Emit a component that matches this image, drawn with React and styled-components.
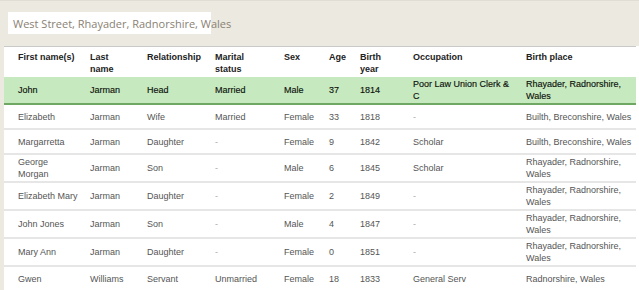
import React from 'react';
import styled, { createGlobalStyle } from 'styled-components';

const GlobalStyle = createGlobalStyle`
  html, body {
    margin: 0;
    padding: 0;
    background: #fff;
  }

  body {
    font-family: "Liberation Sans", Arial, sans-serif;
  }
`;

const Panel = styled.div`
  background: #ece9e1;
  border-top: 1px solid #e0ddd4;
  padding-left: 4px;
`;

const TopBar = styled.div`
  padding: 11px 0 12px 4px;
`;

const SearchBox = styled.div`
  width: 198px;
  height: 22px;
  padding-left: 5px;
  background: #fff;
  display: flex;
  align-items: center;
  font-family: "Open Sans", sans-serif;
  font-size: 11px;
  color: #8a8173;
  white-space: nowrap;
`;

const TableWrap = styled.div`
  background: #fff;
`;

const Table = styled.table`
  width: 632px;
  table-layout: fixed;
  border-collapse: collapse;
  border-top: 1px solid #c9c9c9;
  font-size: 9px;
  line-height: 12px;
`;

const Th = styled.th`
  text-align: left;
  vertical-align: top;
  font-weight: bold;
  color: #222;
  padding: 4px 8px 2px 0;

  &:first-child {
    padding-left: 14px;
  }
`;

const Row = styled.tr`
  background: ${(p) => (p.$current ? '#c7e9c0' : '#fff')};
  border-bottom: 2px solid ${(p) => (p.$current ? '#6fa863' : '#e6e6e6')};
  color: ${(p) => (p.$current ? '#0d130b' : '#555')};
  -webkit-text-stroke: ${(p) => (p.$current ? '0.15px #0d130b' : '0')};
`;

const Td = styled.td`
  vertical-align: middle;
  height: 21px;
  padding: 1px 8px 1px 0;

  &:first-child {
    padding-left: 14px;
    padding-right: 11px;
  }

  &:last-child {
    padding-right: 2px;
  }
`;

const Dash = styled.span`
  color: ${(p) => (p.$current ? 'inherit' : '#aaa')};
`;

const widths = [86, 57, 68, 69, 45, 31, 53, 113, 110];

const people = [
  ['John', 'Jarman', 'Head', 'Married', 'Male', '37', '1814', 'Poor Law Union Clerk & C', 'Rhayader, Radnorshire, Wales'],
  ['Elizabeth', 'Jarman', 'Wife', 'Married', 'Female', '33', '1818', '-', 'Builth, Breconshire, Wales'],
  ['Margarretta', 'Jarman', 'Daughter', '-', 'Female', '9', '1842', 'Scholar', 'Builth, Breconshire, Wales'],
  ['George Morgan', 'Jarman', 'Son', '-', 'Male', '6', '1845', 'Scholar', 'Rhayader, Radnorshire, Wales'],
  ['Elizabeth Mary', 'Jarman', 'Daughter', '-', 'Female', '2', '1849', '-', 'Rhayader, Radnorshire, Wales'],
  ['John Jones', 'Jarman', 'Son', '-', 'Male', '4', '1847', '-', 'Rhayader, Radnorshire, Wales'],
  ['Mary Ann', 'Jarman', 'Daughter', '-', 'Female', '0', '1851', '-', 'Rhayader, Radnorshire, Wales'],
  ['Gwen', 'Williams', 'Servant', 'Unmarried', 'Female', '18', '1833', 'General Serv', 'Radnorshire, Wales'],
];

const App = () => (
  <>
    <GlobalStyle />
    <Panel>
      <TopBar>
        <SearchBox>West Street, Rhayader, Radnorshire, Wales</SearchBox>
      </TopBar>
      <TableWrap>
        <Table>
          <colgroup>
            {widths.map((w, i) => <col key={i} style={{ width: w }} />)}
          </colgroup>
          <thead>
            <tr>
              <Th>First name(s)</Th>
              <Th>Last<br />name</Th>
              <Th>Relationship</Th>
              <Th>Marital<br />status</Th>
              <Th>Sex</Th>
              <Th>Age</Th>
              <Th>Birth<br />year</Th>
              <Th>Occupation</Th>
              <Th>Birth place</Th>
            </tr>
          </thead>
          <tbody>
            {people.map((p, i) => (
              <Row key={i} $current={i === 0}>
                {p.map((v, j) => (
                  <Td key={j}>
                    {v === '-' ? <Dash $current={i === 0}>-</Dash> : v}
                  </Td>
                ))}
              </Row>
            ))}
          </tbody>
        </Table>
      </TableWrap>
    </Panel>
  </>
);

export default App;
